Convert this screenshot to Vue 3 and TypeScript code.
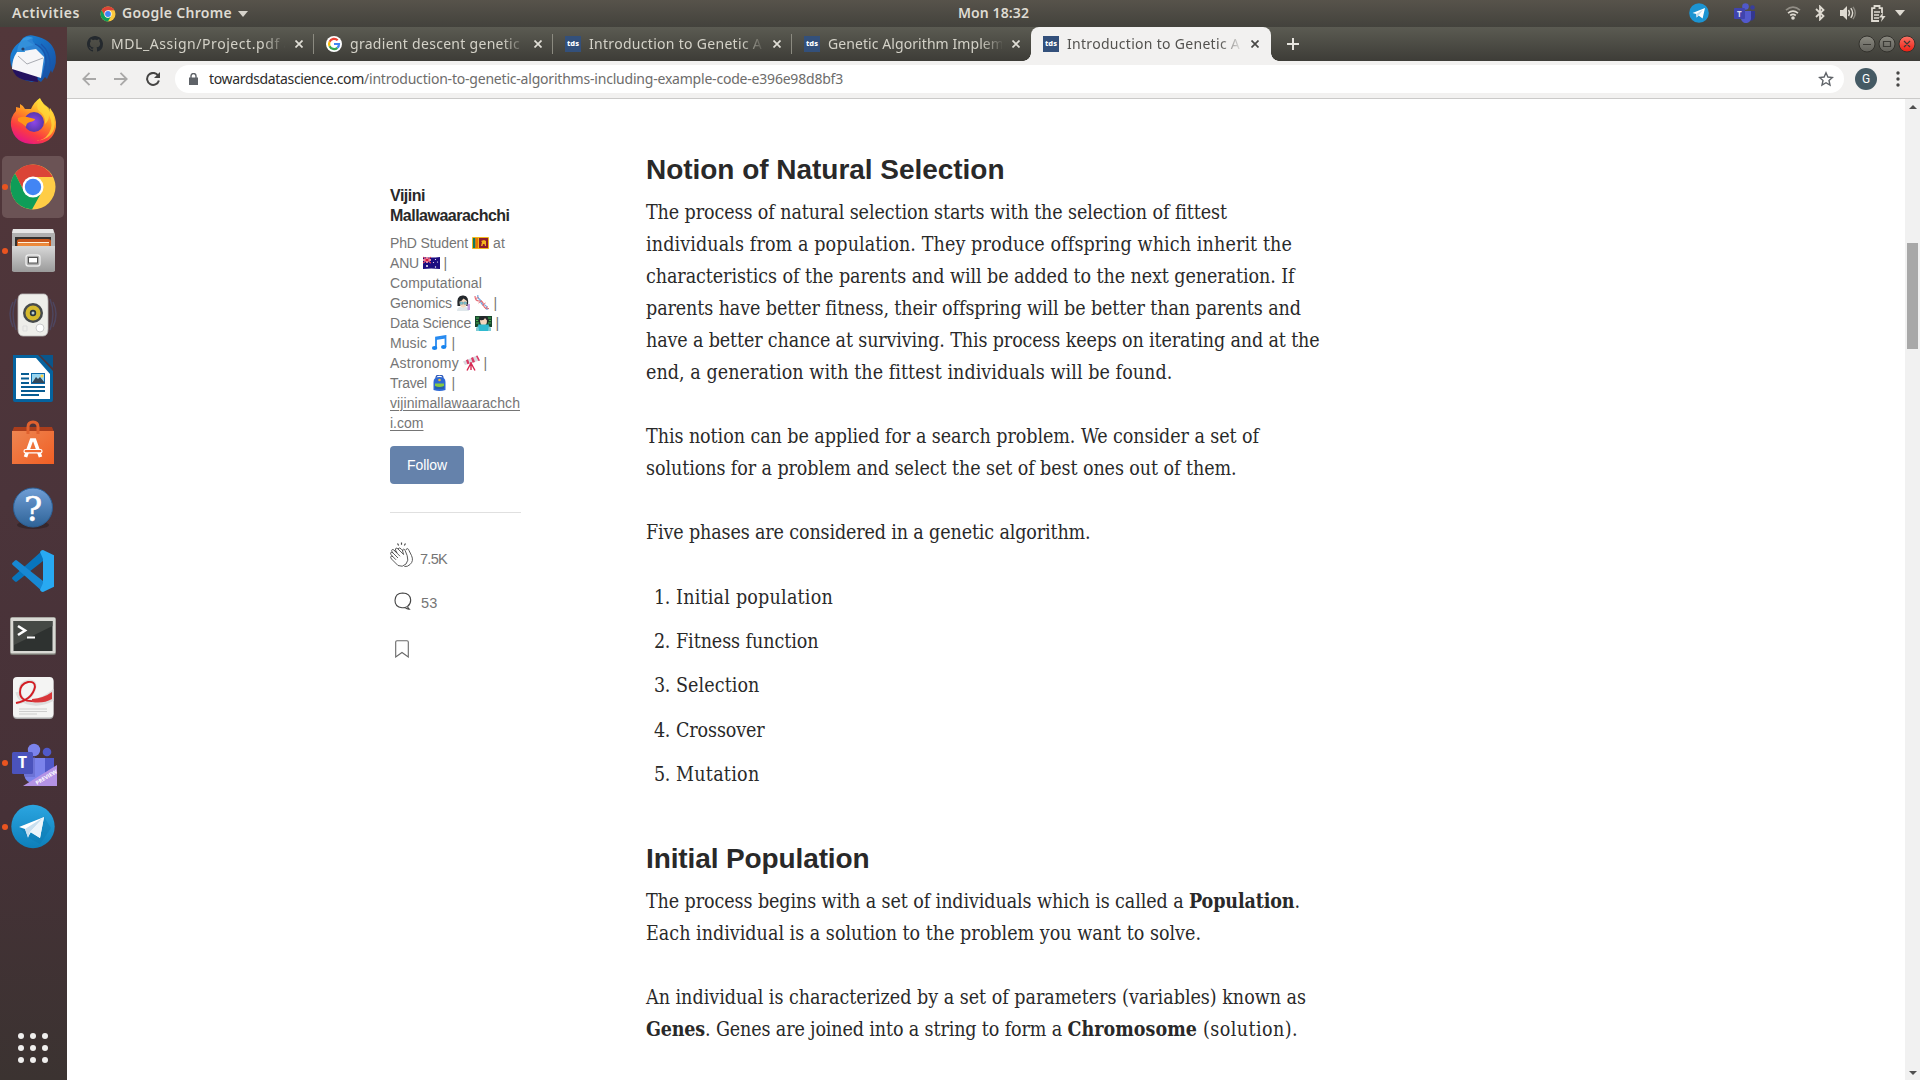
<script setup lang="ts">
interface Segment { text: string; width: number; bold?: boolean }
interface Tab { title: string; width: number; icon: 'github' | 'google' | 'tds'; active?: boolean }
interface BioLine { text: string; width: number; emoji: string[]; tail?: string; tailWidth?: number }

// Justifies a run of text to a given advance width by spreading its letters.
const vFit = {
  mounted(el: HTMLElement, binding: { value: number }) {
    const count = Array.from(el.textContent ?? '').length
    const natural = el.getBoundingClientRect().width
    if (count > 0) el.style.letterSpacing = `${(binding.value - natural) / count}px`
  },
}

const tabs: Tab[] = [
  { title: 'MDL_Assign/Project.pdf at', width: 187, icon: 'github' },
  { title: 'gradient descent genetic al', width: 186, icon: 'google' },
  { title: 'Introduction to Genetic Al', width: 177, icon: 'tds' },
  { title: 'Genetic Algorithm Implem', width: 176, icon: 'tds' },
  { title: 'Introduction to Genetic Al', width: 177, icon: 'tds', active: true },
]

const bio: BioLine[] = [
  { text: 'PhD Student', width: 78, emoji: ['lk'], tail: 'at', tailWidth: 12 },
  { text: 'ANU', width: 29, emoji: ['au'], tail: '|' },
  { text: 'Computational', width: 92, emoji: [] },
  { text: 'Genomics', width: 62, emoji: ['scientist', 'dna'], tail: '|' },
  { text: 'Data Science', width: 81, emoji: ['coder'], tail: '|' },
  { text: 'Music', width: 37, emoji: ['music'], tail: '|' },
  { text: 'Astronomy', width: 69, emoji: ['scope'], tail: '|' },
  { text: 'Travel', width: 37, emoji: ['bag'], tail: '|' },
]

const selection: Segment[][][] = [
  [
    [{ text: 'The process of natural selection starts with the selection of fittest', width: 580.5 }],
    [{ text: 'individuals from a population. They produce offspring which inherit the', width: 645.5 }],
    [{ text: 'characteristics of the parents and will be added to the next generation. If', width: 648.5 }],
    [{ text: 'parents have better fitness, their offspring will be better than parents and', width: 654 }],
    [{ text: 'have a better chance at surviving. This process keeps on iterating and at the', width: 673.5 }],
    [{ text: 'end, a generation with the fittest individuals will be found.', width: 526 }],
  ],
  [
    [{ text: 'This notion can be applied for a search problem. We consider a set of', width: 613 }],
    [{ text: 'solutions for a problem and select the set of best ones out of them.', width: 590.5 }],
  ],
  [[{ text: 'Five phases are considered in a genetic algorithm.', width: 444.5 }]],
]

const phases: Segment[] = [
  { text: 'Initial population', width: 157 },
  { text: 'Fitness function', width: 142.5 },
  { text: 'Selection', width: 83.5 },
  { text: 'Crossover', width: 88.5 },
  { text: 'Mutation', width: 83.5 },
]

const population: Segment[][][] = [
  [
    [
      { text: 'The process begins with a set of individuals which is called a ', width: 543 },
      { text: 'Population', width: 105.5, bold: true },
      { text: '.', width: 5.5 },
    ],
    [{ text: 'Each individual is a solution to the problem you want to solve.', width: 555 }],
  ],
  [
    [{ text: 'An individual is characterized by a set of parameters (variables) known as', width: 660 }],
    [
      { text: 'Genes', width: 59, bold: true },
      { text: '. Genes are joined into a string to form a ', width: 362.5 },
      { text: 'Chromosome', width: 129.5, bold: true },
      { text: ' (solution).', width: 101 },
    ],
  ],
]
</script>

<template>
  <div class="screen">
    <header class="topbar">
      <div class="top-left">
        <span v-fit="68" class="top-text">Activities</span>
        <svg class="mini-chrome" width="16" height="16" viewBox="-24 -24 48 48">
          <circle r="22.5" fill="#fbc93d" />
          <path d="M0-22.5A22.5 22.5 0 0 1 19.5-11.2H0L-9.7 5.6-19.5-11.2A22.5 22.5 0 0 1 0-22.5z" fill="#db4437" />
          <path d="M-19.5-11.2L-9.7 5.6A11.2 11.2 0 0 0 0 11.2L9.7 5.6 0 22.5A22.5 22.5 0 0 1-19.5-11.2z" fill="#0f9d58" />
          <circle r="11" fill="#fff" /><circle r="8.8" fill="#4285f4" />
        </svg>
        <span v-fit="110" class="top-text">Google Chrome</span>
        <svg class="caret" width="10" height="6" viewBox="0 0 10 6"><path d="M0 0h10L5 6z" fill="#d6d3cb" /></svg>
      </div>
      <span v-fit="71" class="top-text clock">Mon 18:32</span>
      <div class="top-right">
        <svg width="20" height="20" viewBox="0 0 20 20"><circle cx="10" cy="10" r="9.8" fill="#1c94d2" /><path d="M3.5 10L16 5l-2.4 10.5-4-3-2 2-.4-3.4z" fill="#fff" /><path d="M7.2 11.1L14 6.7l-4.4 5.7-2 2z" fill="#c4dceb" /></svg>
        <svg class="mini-teams" width="22" height="20" viewBox="0 0 22 20"><circle cx="11.5" cy="3.5" r="3.3" fill="#5059c9" /><circle cx="18.5" cy="4.5" r="2.3" fill="#383e9c" /><path d="M15 8h6v6a4 4 0 0 1-6 3z" fill="#33378f" /><path d="M7 8h10v6a5 5 0 0 1-10 2z" fill="#5259cc" /><rect y="5" width="11" height="11" rx="1" fill="#4044ad" /><text x="3" y="13.6" font-family="Open Sans, sans-serif" font-size="8" font-weight="700" fill="#d8d8ee">T</text></svg>
        <svg class="wifi" width="16" height="14" viewBox="0 0 16 14" fill="none" stroke="#dfdbd2"><path d="M1 4.2Q8-2 15 4.2" stroke-width="1.8" opacity=".45" /><path d="M3 7.1q5-4 10 0M5.2 9.5q2.8-2.4 5.6 0" stroke-width="1.7" /><circle cx="8" cy="12" r="1.8" fill="#dfdbd2" stroke="none" /></svg>
        <svg class="bt" width="10" height="16" viewBox="0 0 10 16" fill="none" stroke="#dfdbd2" stroke-width="1.8"><path d="M1 4l7.5 7L5 14.5v-13L8.5 5 1 12" /></svg>
        <svg class="vol" width="17" height="14" viewBox="0 0 17 14" fill="none"><path d="M0 4h3l4-4v14l-4-4H0z" fill="#dfdbd2" /><path d="M8.5 4q2 3 0 6M10.8 2.2q3.6 4.8 0 9.6" stroke="#dfdbd2" stroke-width="1.4" /><path d="M13 .8q4.5 6.2 0 12.4" stroke="#8c8981" stroke-width="1.4" /></svg>
        <svg class="bat" width="15" height="17" viewBox="0 0 15 17" fill="none"><path d="M8 16H1V3.2h2.5V1h5v2.2H11V8" stroke="#dfdbd2" stroke-width="1.8" /><path d="M3 7h6M3 10h5M3 13h5" stroke="#dfdbd2" stroke-width="1.6" /><path d="M12 7.5l-4 5h3L10 17l4.6-6h-3z" fill="#dfdbd2" /></svg>
        <svg class="caret-r" width="10" height="6" viewBox="0 0 10 6"><path d="M0 0h10L5 6z" fill="#dfdbd2" /></svg>
      </div>
    </header>

    <div class="body">
      <nav class="dock">
        <div class="dock-item">
          <svg viewBox="0 0 48 48">
            <defs><linearGradient id="tb" x1="0" y1="0" x2="1" y2="1"><stop offset="0" stop-color="#1b8be0" /><stop offset="1" stop-color="#154a9e" /></linearGradient></defs>
            <path d="M14 3Q19-1 26 1 42 4 46 17q3 11-3 21l-1-3-4 9-2-2-4 5-3-2-6 2Q8 45 3 33-3 17 11 7z" fill="url(#tb)" />
            <path d="M3 33q2 9 12 12l14 2-1-8z" fill="#24125f" />
            <path d="M11 8q5-9 13-5-2 3 3 7 10 7 9 17L33 41q-2-14-7-20-8 1-12 2-6-6-3-15z" fill="#2d83d4" />
            <path d="M11 8q5-9 13-5-7 2-9 6-1 5 3 10-7 2-9 6z" fill="#3699e0" />
            <path d="M8 17l19-3 8 8-3 21L3 34q0-10 5-17z" fill="#f6f6f8" />
            <path d="M9 21l9 8 16-6" stroke="#a9abb2" stroke-width="1" fill="none" />
            <path d="M8 17q1-12 9-12l8 5-8 2q-2 3-1 5z" fill="#3390da" />
            <path d="M26 9q12 5 11 20l-2 12M32 9q10 8 9 23" stroke="#1a55ad" fill="none" stroke-width="1.3" />
            <circle cx="14" cy="14" r="1.6" fill="#273c66" />
          </svg>
        </div>
        <div class="dock-item">
          <svg viewBox="0 1 48 48">
            <defs>
              <linearGradient id="fx" x1=".8" y1="0" x2=".3" y2="1"><stop offset=".1" stop-color="#ffe43a" /><stop offset=".45" stop-color="#ff8c23" /><stop offset=".75" stop-color="#fb3b42" /><stop offset="1" stop-color="#e3148a" /></linearGradient>
              <radialGradient id="fxp"><stop offset="0" stop-color="#8e47e8" /><stop offset="1" stop-color="#5a37ad" /></radialGradient>
            </defs>
            <path d="M31 0q3 7 7 9l3 5 0-4q7 9 6 19Q44 46 25 46 5 46 2 28 1 19 7 13l0-4 4 1 0-4q4 2 5 5l6 0q3-7 9-11z" fill="url(#fx)" />
            <circle cx="25" cy="24" r="10" fill="url(#fxp)" />
            <path d="M9 20q5-2 9-1l8 2q0 2-5 3-4 1-4 5-4-4-8-6z" fill="#ff9518" />
            <path d="M31 1q-5 8-1 12 7 4 6 13 4-3 4-9 5 10 0 18-5 8-14 8 15-1 19-12 3-11-5-21-6-4-9-9z" fill="#ffd93a" opacity=".75" />
          </svg>
        </div>
        <div class="dock-item running selected">
          <svg viewBox="-24 -24 48 48">
            <circle r="22.5" fill="#ffcd46" />
            <path d="M0-22.5A22.5 22.5 0 0 1 19.8-10H0L-8.7 5-18-13.5A22.5 22.5 0 0 1 0-22.5z" fill="#db4437" />
            <path d="M-18-13.5L-8.7 5A10 10 0 0 0 0 10L8.700 5-1 22.500A22.500 22.500 0 0 1-18-13.500z" fill="#0f9d58" />
            <circle r="10.5" fill="#fff" /><circle r="8.2" fill="#4285f4" />
          </svg>
        </div>
        <div class="dock-item running">
          <svg viewBox="0 0 48 48">
            <defs><linearGradient id="fl" x1="0" y1="0" x2="0" y2="1"><stop offset="0" stop-color="#d8d8d8" /><stop offset="1" stop-color="#9a9a9a" /></linearGradient></defs>
            <path d="M4 2h40l2 5v37H3V7z" fill="#b0b0b0" /><path d="M4 2h40l1 4H3z" fill="#e6e6e6" />
            <rect x="6" y="10" width="36" height="10" fill="#33302e" />
            <path d="M8 14q0-2 3-2h28q3 0 3 2v6H8z" fill="#c9571c" /><path d="M9 15h31v1.200H9z" fill="#fff0d9" /><path d="M9 16.200h31v2.800H9z" fill="#ee8a3a" />
            <path d="M3 19h43v24q0 2-2 2H5q-2 0-2-2z" fill="url(#fl)" />
            <rect x="17" y="28" width="14" height="11" rx="2.5" fill="#aaa" stroke="#ececec" stroke-width="1.4" /><rect x="19.5" y="30.5" width="9" height="5.5" fill="#fff" stroke="#555" />
          </svg>
        </div>
        <div class="dock-item">
          <svg viewBox="0 0 48 48">
            <g fill="none" stroke="#4d4a68" stroke-width="1.5" opacity=".8"><path d="M4 11q-6 12 0 25M7 8q-6 15 0 31M44 11q6 12 0 25M41 8q6 15 0 31" /></g>
            <path d="M13 3h22q4 0 4 7v28q0 7-5 7H14q-5 0-5-7V10q0-7 4-7z" fill="#eeeeea" stroke="#bbb" stroke-width=".8" />
            <circle cx="24" cy="22" r="10" fill="#474b4c" /><circle cx="24" cy="22" r="7.5" fill="#d5b92c" /><circle cx="24" cy="22" r="3.2" fill="#293640" /><circle cx="24" cy="22" r="1.5" fill="#bcc" />
            <circle cx="31" cy="37" r="4" fill="#fff" stroke="#ccc" /><path d="M14 35h4v5h-4z" fill="none" stroke="#ddd" />
          </svg>
        </div>
        <div class="dock-item">
          <svg viewBox="0 0 48 48">
            <path d="M4 0h25l15 16v29q0 2-2 2H6q-2 0-2-2z" fill="#05639f" /><path d="M7 3h20l14 16v25H7z" fill="#fff" /><path d="M31 0h13v13z" fill="#0a568b" />
            <path d="M12 19h8M12 23.5h8M12 28h8M12 32h24M12 36h24M12 40h18" stroke="#075c92" stroke-width="2" />
            <path d="M22 18h14v11H22z" fill="#0b69aa" /><path d="M23 19h12v8H23z" fill="#99d5ef" /><circle cx="33" cy="21" r="1.5" fill="#ffd33c" /><path d="M23 28l4-6 2 2 2-2 5 6z" fill="#334758" />
          </svg>
        </div>
        <div class="dock-item">
          <svg viewBox="0 0 48 48">
            <defs><linearGradient id="sw" x1="0" y1="0" x2="1" y2="1"><stop offset="0" stop-color="#ed8551" /><stop offset="1" stop-color="#f15f24" /></linearGradient></defs>
            <path d="M5 8h38l2 5H3z" fill="#a93d1c" /><path d="M3 12h42v33H3z" fill="url(#sw)" />
            <path d="M19 15V8q0-5 5-5t5 5v7" fill="none" stroke="#e0612e" stroke-width="3" />
            <path d="M16.500 38l6-17h3l6 17M18 32h12" stroke="#fff" stroke-width="3.600" fill="none" /><rect x="15" y="30.500" width="18" height="3.400" rx="1.700" fill="#f16a31" stroke="#fff" stroke-width="1.200" />
          </svg>
        </div>
        <div class="dock-item">
          <svg viewBox="0 -1 48 48">
            <defs><linearGradient id="hp" x1="0" y1="0" x2="0" y2="1"><stop offset="0" stop-color="#709ed6" /><stop offset="1" stop-color="#2e6397" /></linearGradient></defs>
            <ellipse cx="24" cy="41" rx="16" ry="4" fill="#000" opacity=".25" />
            <circle cx="24" cy="23.500" r="19.500" fill="url(#hp)" stroke="#2c5f94" />
            <text x="24" y="36.500" text-anchor="middle" font-family="DejaVu Serif, serif" font-size="34" fill="#fff" stroke="#fff" stroke-width=".5">?</text>
          </svg>
        </div>
        <div class="dock-item">
          <svg viewBox="0 0 48 48">
            <path d="M34 3v11L8 34.500q-1 .8-2 0L3.500 32.200q-1-1 0-2z" fill="#0875bd" /><path d="M34 45V34L8 13.500q-1-.8-2 0L3.500 15.800q-1 1 0 2z" fill="#1788d3" /><path d="M34 3l11 5.200v31.600L34 45q-2 0-3-2l3-7V12l-3-7q1-2 3-2z" fill="#28a9f2" />
          </svg>
        </div>
        <div class="dock-item">
          <svg viewBox="0 -1 48 48">
            <rect x="1" y="5" width="46" height="38" rx="2" fill="#777670" /><rect x="1.500" y="5.500" width="45" height="36" rx="1.500" fill="#d9d9d4" /><rect x="4.500" y="9" width="39" height="30" fill="#2e3230" /><path d="M4.500 9h39v5L5 33z" fill="#454945" />
            <path d="M9 14l7 4.500-7 4.500" fill="none" stroke="#fff" stroke-width="2.600" /><path d="M18 25.500h8" stroke="#fff" stroke-width="2" />
          </svg>
        </div>
        <div class="dock-item">
          <svg viewBox="0 0 48 48">
            <rect x="4" y="3" width="40.500" height="41" rx="4" fill="#aaa" /><rect x="4" y="2" width="40.500" height="40.500" rx="4" fill="#f4f4f3" />
            <path d="M8 28Q24 25 26 11q0-5-6-5Q11 7 11 16q0 12 14 10 11-3 18-9v8q-10 5-18 4-15-1-17-12" fill="none" stroke="#ddd" stroke-width="3" />
            <path d="M7 28Q23 25 26 12q0-6-7-5-8 2-8 10 0 10 14 9" fill="none" stroke="#d31d24" stroke-width="1.900" /><path d="M23 24q12-1 20-7v7q-9 5-20 3z" fill="#d9373a" />
            <path d="M10 34h28M10 36.500h28M10 39h18" stroke="#c9c9c9" stroke-width=".9" />
          </svg>
        </div>
        <div class="dock-item running">
          <svg viewBox="0 -1 48 48">
            <circle cx="25" cy="10" r="6.200" fill="#7b83eb" /><circle cx="38" cy="12" r="4.300" fill="#5059c9" /><path d="M32 18h13v14q-2 7-13 8z" fill="#5059c9" /><path d="M17 18h19v16q-2 9-12 9-7 0-9-8z" fill="#7b83eb" />
            <path d="M12 17h14v20H16z" fill="#5f63c2" opacity=".5" /><rect x="3" y="12" width="21" height="22" rx="1.500" fill="#4b53bc" /><text x="13.400" y="28" text-anchor="middle" font-family="Open Sans, sans-serif" font-size="16" font-weight="700" fill="#fff">T</text>
            <path d="M14 46L48 25v21z" fill="#b493e5" /><text transform="translate(28 45) rotate(-31)" font-family="Open Sans, sans-serif" font-size="5.500" font-weight="700" fill="#fff">PREVIEW</text>
          </svg>
        </div>
        <div class="dock-item running">
          <svg viewBox="0 0 48 48">
            <defs><linearGradient id="tg" x1="0" y1="0" x2="0" y2="1"><stop offset="0" stop-color="#2ba5e0" /><stop offset="1" stop-color="#0d7fba" /></linearGradient></defs>
            <circle cx="24" cy="23.500" r="21.700" fill="url(#tg)" /><path d="M10 24l25-10 7 11-11 16-11-6z" fill="#0b76ad" opacity=".35" /><path d="M10 24l25-10-4 21-9-6-3 5-3-8z" fill="#fff" /><path d="M16 26l19-12-14 15-2 6z" fill="#c8dfef" /><path d="M21 29l14-15-4 21z" fill="#edf5fa" />
          </svg>
        </div>
        <div class="apps"><i v-for="n in 9" :key="n" /></div>
      </nav>

      <main class="window">
        <div class="tabstrip">
          <div v-for="(tab, i) in tabs" :key="i" class="tab" :class="{ active: tab.active, divided: i < 3 }">
            <svg v-if="tab.icon === 'github'" class="favicon" width="16" height="16" viewBox="0 0 16 16"><path fill="#24292e" d="M8 0C3.580 0 0 3.580 0 8c0 3.540 2.290 6.530 5.470 7.590.4.070.55-.17.55-.38 0-.19-.01-.82-.01-1.490-2.010.37-2.530-.49-2.690-.94-.09-.23-.48-.94-.82-1.130-.28-.15-.68-.52-.01-.53.63-.01 1.080.58 1.230.82.72 1.210 1.870.87 2.330.66.070-.52.28-.87.51-1.070-1.780-.2-3.640-.89-3.640-3.950 0-.87.31-1.590.82-2.150-.08-.2-.36-1.020.08-2.120 0 0 .67-.21 2.200.82.64-.18 1.320-.27 2-.27s1.360.090 2 .27c1.530-1.040 2.200-.82 2.200-.82.44 1.100.16 1.920.080 2.120.51.56.82 1.270.82 2.150 0 3.070-1.870 3.750-3.650 3.950.29.25.54.73.54 1.480 0 1.070-.01 1.930-.01 2.200 0 .21.15.46.55.38A8.010 8.010 0 0 0 16 8c0-4.420-3.580-8-8-8z" /></svg>
            <svg v-else-if="tab.icon === 'google'" class="favicon" width="16" height="16" viewBox="0 0 16 16"><circle cx="8" cy="8" r="8" fill="#fff" /><g fill="none" stroke-width="2.200"><path d="M11.700 4.300A5 5 0 0 0 3.600 5.800" stroke="#ea4335" /><path d="M3.600 5.800a5 5 0 0 0 0 4.400" stroke="#fbbc05" /><path d="M3.600 10.200a5 5 0 0 0 7.800 1.600" stroke="#34a853" /><path d="M11.400 11.800A5 5 0 0 0 13 8H8" stroke="#4285f4" /></g></svg>
            <span v-else class="favicon tds">tds</span>
            <div class="tab-title"><span v-fit="tab.width">{{ tab.title }}</span></div>
            <svg class="tab-close" width="8" height="8" viewBox="0 0 8 8"><path d="M.5.5l7 7m0-7l-7 7" stroke="currentColor" stroke-width="1.700" /></svg>
          </div>
          <svg class="new-tab" width="12" height="12" viewBox="0 0 12 12"><path d="M6 0v12M0 6h12" stroke="#e6e4de" stroke-width="2" /></svg>
          <div class="controls">
            <svg width="60" height="18" viewBox="0 0 60 18">
              <defs>
                <linearGradient id="wg" x1="0" y1="0" x2="0" y2="1"><stop offset="0" stop-color="#8b8a81" /><stop offset="1" stop-color="#61605a" /></linearGradient>
                <linearGradient id="wr" x1="0" y1="0" x2="0" y2="1"><stop offset="0" stop-color="#fa7466" /><stop offset="1" stop-color="#ed1d12" /></linearGradient>
              </defs>
              <g stroke="#33322d"><circle cx="10" cy="9" r="8" fill="url(#wg)" /><circle cx="30" cy="9" r="8" fill="url(#wg)" /><circle cx="50" cy="9" r="8" fill="url(#wr)" /></g>
              <path d="M6 9.500h8M26.500 6.500h7v5h-7zM47 6l6 6m0-6l-6 6" fill="none" stroke="#3b3a35" stroke-width="1.200" />
            </svg>
          </div>
        </div>

        <div class="toolbar">
          <svg class="back" width="14" height="14" viewBox="0 0 14 14" fill="none" stroke="#a9a8a7" stroke-width="1.800"><path d="M14 7H1.500M7.500.8L1.300 7l6.200 6.200" /></svg>
          <svg class="forward" width="14" height="14" viewBox="0 0 14 14" fill="none" stroke="#a9a8a7" stroke-width="1.800"><path d="M0 7h12.500M6.500.8L12.700 7l-6.200 6.200" /></svg>
          <svg class="reload" width="14" height="14" viewBox="0 0 14 14"><path d="M12 3.400A6 6 0 1 0 12.900 8.500" fill="none" stroke="#454443" stroke-width="2" /><path d="M14 0v6H8z" fill="#454443" /></svg>
          <div class="omnibox">
            <svg class="lock" width="9" height="12" viewBox="0 0 9 12"><path d="M0 4.500h9V12H0z" fill="#5f6368" /><path d="M2 5V3a2.500 2.500 0 0 1 5 0v2" fill="none" stroke="#5f6368" stroke-width="1.400" /></svg>
            <span v-fit="155" class="host">towardsdatascience.com</span><span v-fit="479" class="path">/introduction-to-genetic-algorithms-including-example-code-e396e98d8bf3</span>
            <svg class="star" width="16" height="16" viewBox="0 0 16 16"><path d="M8 1.800l1.900 4.200 4.500.5-3.400 3 1 4.500-4-2.300L4 14l1-4.500-3.400-3 4.500-.5z" fill="none" stroke="#5f6368" stroke-width="1.400" /></svg>
          </div>
          <span class="avatar">G</span>
          <svg class="menu" width="4" height="16" viewBox="0 0 4 16" fill="#474645"><circle cx="2" cy="2" r="1.700" /><circle cx="2" cy="8" r="1.700" /><circle cx="2" cy="14" r="1.700" /></svg>
        </div>

        <div class="page">
          <aside class="author">
            <div class="name"><span v-fit="35">Vijini</span><br><span v-fit="119.500">Mallawaarachchi</span></div>
            <div class="bio">
              <div v-for="line in bio" :key="line.text" class="bio-line">
                <span v-fit="line.width">{{ line.text }}</span>
                <template v-for="e in line.emoji" :key="e">
                  <svg v-if="e === 'lk'" width="17" height="16" viewBox="0 0 17 16"><rect y="2" width="17" height="12" rx=".8" fill="#f1b71c" /><path d="M1 3h2.500v10H1z" fill="#117a5d" /><path d="M3.500 3H6v10H3.500z" fill="#eb7400" /><path d="M7 3h9v10H7z" fill="#8d1c2c" /><path d="M9 11l1-4-1-1 3-1 2 1v5h-1l-.5-2-1.500 0-.5 2z" fill="#f5b51d" /></svg>
                  <svg v-else-if="e === 'au'" width="17" height="16" viewBox="0 0 17 16"><path d="M0 2q8 1 17 0v12q-9-1-17 0z" fill="#1d0d80" /><path d="M0 2l8 6M8 2L0 8" stroke="#fff" stroke-width="1" /><path d="M4 2v6M0 5h8" stroke="#fff" stroke-width="2" /><path d="M4 2v6M0 5h8M0 2l8 6M8 2L0 8" stroke="#d8123c" stroke-width="1" /><g fill="#fff"><circle cx="4" cy="11" r="1" /><circle cx="12.500" cy="4.500" r=".6" /><circle cx="10.500" cy="7.500" r=".6" /><circle cx="14.500" cy="7" r=".6" /><circle cx="12.500" cy="12" r=".7" /></g></svg>
                  <svg v-else-if="e === 'scientist'" class="narrow" width="15" height="16" viewBox="0 0 15 16"><path d="M1.500 11Q0 0 7 .5 13.500 0 12 11z" fill="#25292d" /><path d="M3.500 6.500Q6 6 7.500 3.500L11 6q0 7-3.700 7T3.500 6.500z" fill="#f5d9c0" /><path d="M1 16q0-4 4-4l2 1 2-1q4 0 4 4z" fill="#dfe7eb" /><path d="M4 7h2.700v2.200H4zM7.800 7h2.700v2.200H7.800z" fill="#84d0df" stroke="#55808d" stroke-width=".5" /><path d="M11.500 9H14v6h-2.500z" fill="#c9a1e0" /></svg>
                  <svg v-else-if="e === 'dna'" class="dna" width="16" height="16" viewBox="0 0 16 16" fill="none" stroke-width="1.200"><path d="M1 1q0 5 4 5 4-.5 4.500 4 .5 4 5.500 3.500" stroke="#e56c75" /><path d="M4 0q-1 3 2 4.500Q7 9 9 9.500q4 0 4 5.500" stroke="#72a6dd" /><path d="M1.500 3.500l3-1M4.500 8L8 5.500M8 10.500L11.500 8M11 14l3-2.500" stroke="#e56c75" stroke-width="1" /></svg>
                  <svg v-else-if="e === 'coder'" width="17" height="16" viewBox="0 0 17 16"><path d="M0 1h17v11H0z" fill="#17472e" /><path d="M1 3h3M1 5.500h2M1 8h3M13 3h3M14 5.500h2M13 8h3" stroke="#4baf50" /><path d="M4 7Q3 0 8.500 1q6-1 4.500 7z" fill="#24272a" /><path d="M5 5q4 1 5-2l2 2.500q0 5-3.500 5T5 5z" fill="#f4d6bd" /><path d="M1 16v-3q1-2 4-2h7q3 0 4 2v3z" fill="#80ccd5" /><path d="M3 9.500h11l-1 6.500H4z" fill="#30bad0" /></svg>
                  <svg v-else-if="e === 'music'" width="17" height="16" viewBox="0 0 17 16"><path d="M5 13V2.500L14.500 1v11" fill="none" stroke="#278af0" stroke-width="1.800" /><path d="M5 3l9.500-1.500v2L5 5z" fill="#278af0" /><ellipse cx="3.600" cy="13" rx="2.700" ry="2" fill="#1683ee" /><ellipse cx="12.700" cy="12" rx="2.700" ry="2" fill="#1683ee" /></svg>
                  <svg v-else-if="e === 'scope'" width="17" height="16" viewBox="0 0 17 16"><path d="M0 6.500L14 .5l2.500 5L2 10z" fill="#d9d9df" /><path d="M3 5.300l2-1 1.600 4.200-2.200.8zM8 3l2-.9 2 4.800-2.400.8zM13 1l1.500-.6 2.500 5-1.500.5z" fill="#dc3964" /><path d="M8 8l-4 7.500M8 8l4 7.500M8 7v8" stroke="#d72751" stroke-width="1.400" /></svg>
                  <svg v-else width="17" height="16" viewBox="0 0 17 16"><path d="M5 3q0-3 3.500-3T12 3" fill="none" stroke="#2d57b4" stroke-width="1.300" /><path d="M2.500 15V7q0-5 6-5t6 5v8q-6 2-12 0z" fill="#2d68d4" /><rect x="4" y="9" width="9" height="5" rx="1" fill="#2460ad" /><path d="M4 8.500h9v2.500q-4.500 2-9 0z" fill="#86c941" /><circle cx="8.500" cy="5" r="1.300" fill="#ebbc35" /></svg>
                </template>
                <span v-if="line.tail === '|'" class="bar">|</span>
                <span v-else-if="line.tail" v-fit="line.tailWidth ?? 0">{{ line.tail }}</span>
              </div>
              <a class="site"><span v-fit="130">vijinimallawaarachch</span><br><span v-fit="33.500">i.com</span></a>
            </div>
            <button class="follow"><span v-fit="40">Follow</span></button>
            <div class="stats">
              <div class="stat claps">
                <svg width="24" height="26" viewBox="0 0 24 26" fill="none" stroke="#4a4a4a" stroke-width=".9"><path d="M7.500 1.500l1.200 2M11.500 .5v2.300M15.500 1.500l-1.200 2" stroke-width="1.200" /><path d="M8 23.500L1.500 17Q0 15 1 14.300q.8-.6 2 .5L1 12.500q-1-1.600 0-2.200.9-.4 2 .7L2 9.500q-.8-1.500.3-2 .8-.3 1.800.7L7 11 5.600 8.200q-.5-1.600.4-2 .9-.4 2 .8l5.600 5.500-1-3.500q-.2-1.600.9-1.800 1.300-.1 1.700 1.500l2 5q1.800 4.800-1.200 8.300-3.600 3.700-8 1.500z" /><path d="M3 11l5 5M4 8.200l6 6M3 14.800l3 3M8 7q1-2 3-.2l2 2M16 8q.5-1.800 1.800-1.300.9.500 1.200 1.800l2.500 5q2.500 5.500-1.500 9-2.500 2.500-5.600 2" /></svg>
                <span v-fit="27">7.5K</span>
              </div>
              <div class="stat comments">
                <svg width="18" height="18" viewBox="0 0 18 18"><path d="M13 14.600Q11 16 8 15.700.8 15 1 8.300 1.300 1.200 8.700 1q7.500.1 8 7 0 4-3 6.300-.2 1.500 1.600 2.800-2 .2-4.300-1.600" fill="none" stroke="#444" stroke-width="1.100" /></svg>
                <span v-fit="16.500">53</span>
              </div>
              <div class="stat"><svg class="bookmark" width="14" height="18" viewBox="0 0 14 18"><path d="M.7 17V2q0-1.300 1.300-1.300h10q1.300 0 1.300 1.300v15L7 12.500z" fill="none" stroke="#696969" stroke-width="1.100" /></svg></div>
            </div>
          </aside>

          <article class="story">
            <h2><span v-fit="358.500">Notion of Natural Selection</span></h2>
            <p v-for="(para, i) in selection" :key="i">
              <span v-for="(line, j) in para" :key="j" class="line"><span v-for="(s, k) in line" :key="k" v-fit="s.width" :class="{ strong: s.bold }">{{ s.text }}</span></span>
            </p>
            <ol>
              <li v-for="(phase, i) in phases" :key="phase.text"><span class="num">{{ i + 1 }}.</span><span v-fit="phase.width">{{ phase.text }}</span></li>
            </ol>
            <h2><span v-fit="223.500">Initial Population</span></h2>
            <p v-for="(para, i) in population" :key="i">
              <span v-for="(line, j) in para" :key="j" class="line"><span v-for="(s, k) in line" :key="k" v-fit="s.width" :class="{ strong: s.bold }">{{ s.text }}</span></span>
            </p>
          </article>

          <div class="scrollbar">
            <svg width="8" height="4" viewBox="0 0 8 4"><path d="M0 4h8L4 0z" fill="#505050" /></svg>
            <div class="thumb" />
            <svg class="down" width="8" height="4" viewBox="0 0 8 4"><path d="M0 0h8L4 4z" fill="#505050" /></svg>
          </div>
        </div>
      </main>
    </div>
  </div>
</template>

<style>
body { margin: 0; overflow: hidden; }
</style>

<style scoped>
.screen { width: 1920px; height: 1080px; display: flex; flex-direction: column; overflow: hidden; background: #fff; font-family: "Noto Sans", "Open Sans", sans-serif; }
.screen span { white-space: pre; }
.screen svg { display: block; flex: none; }
.topbar { height: 27px; flex: none; display: grid; grid-template-columns: 958px 1fr auto; align-items: center; background: linear-gradient(#57534b, #43423c); color: #dfdbd2; }
.top-text { display: inline-block; font-size: 14px; font-weight: 600; line-height: 26px; height: 27px; justify-self: start; }
.top-left { display: flex; align-items: center; padding-left: 12px; }
.mini-chrome { margin: 0 6px 0 20px; }
.caret { margin-left: 6px; }
.top-right { display: flex; align-items: center; padding: 0 15px 1px 0; }
.mini-teams { margin-left: 25px; }
.wifi { margin-left: 29px; }
.bt { margin-left: 14px; }
.vol { margin-left: 15px; }
.bat { margin-left: 14px; }
.caret-r { margin-left: 9px; }

.body { display: flex; flex: 1; min-height: 0; }
.dock { width: 67px; flex: none; display: flex; flex-direction: column; background: linear-gradient(#52373a, #4b343a 45%, #463137 75%, #3b3331); }
.dock-item { width: 62px; height: 62px; margin: 1px 0 1px 2px; border-radius: 5px; display: flex; align-items: center; position: relative; }
.dock-item svg { width: 48px; height: 48px; margin-left: 7px; overflow: visible; }
.selected { background: #6b5355; }
.running::before { content: ""; position: absolute; left: 0; top: 28px; width: 6px; height: 6px; border-radius: 50%; background: #e95420; }
.apps { margin: auto 0 17px 18px; display: grid; grid-template-columns: repeat(3, 6px); gap: 6px; }
.apps i { width: 6px; height: 6px; border-radius: 50%; background: #f0efee; }

.window { flex: 1; min-width: 0; display: flex; flex-direction: column; }
.tabstrip { height: 34px; flex: none; display: flex; background: linear-gradient(#5b5b52, #3d3c37); padding-left: 8px; color: #d4d2c8; }
.tab { width: 239px; height: 34px; box-sizing: border-box; padding-left: 12px; display: flex; align-items: center; position: relative; }
.divided::after { content: ""; position: absolute; right: 0; top: 7px; width: 1px; height: 20px; background: #8b8a80; }
.active { width: 240px; background: #f2f1f0; border-radius: 8px 8px 0 0; color: #53524f; }
.active::before, .active::after { content: ""; position: absolute; bottom: 0; width: 8px; height: 8px; }
.active::before { left: -8px; background: radial-gradient(circle at 0 0, transparent 7.500px, #f2f1f0 8px); }
.active::after { right: -8px; background: radial-gradient(circle at 100% 0, transparent 7.500px, #f2f1f0 8px); }
.favicon { width: 16px; height: 16px; flex: none; }
.tds { background: #33507b; color: #fff; font-size: 7.500px; font-weight: 800; line-height: 15px; text-align: center; }
.tab-title { margin-left: 8px; width: 174px; overflow: hidden; font-size: 14px; line-height: 20px; -webkit-mask-image: linear-gradient(90deg, #000 152px, rgba(0, 0, 0, .1) 174px); mask-image: linear-gradient(90deg, #000 152px, rgba(0, 0, 0, .1) 174px); }
.tab-title span { display: inline-block; }
.tab-close { margin-left: 10px; color: #e0ded6; }
.active .tab-close { color: #494846; }
.new-tab { margin: 11px 0 0 16px; }
.controls { margin: 8px 3px 0 auto; }

.toolbar { height: 38px; flex: none; box-sizing: border-box; background: #f2f1f0; border-bottom: 1px solid #cbcac9; display: flex; align-items: center; padding: 0 20px 1px 15px; }
.forward { margin-left: 18px; }
.reload { margin-left: 18px; }
.omnibox { margin-left: 15px; width: 1669px; height: 28px; border-radius: 14px; background: #fff; display: flex; align-items: center; font-size: 14px; }
.omnibox span { display: inline-block; line-height: 26px; }
.lock { margin: 0 11px 0 14px; }
.host { color: #2d2c2b; }
.path { color: #6d6c6b; }
.star { margin: 0 10px 0 auto; }
.avatar { margin-left: 11px; width: 22px; height: 22px; border-radius: 50%; background: #455a64; color: #fff; font: 12px/22px Roboto, sans-serif; text-align: center; }
.menu { margin-left: auto; }

.page { flex: 1; min-height: 0; display: flex; background: #fff; }
.author { width: 131px; margin-left: 323px; padding-top: 87px; font-family: "Liberation Sans", Arial, sans-serif; color: #757575; flex: none; }
.author span { display: inline-block; }
.name { font-size: 16px; line-height: 20px; font-weight: 700; color: #292929; height: 40px; }
.name span, .site span { vertical-align: top; }
.bio { margin-top: 7px; font-size: 14px; line-height: 20px; }
.bio-line { display: flex; height: 20px; }
.bio-line svg { margin: 2px 4px 0; }
.bio-line svg.narrow { margin-right: 0; }
.bio-line svg.dna { margin-left: 3px; }
.bar { width: 4px; margin-left: -.5px; }
.site { display: block; height: 40px; }
.site span { text-decoration: underline; text-underline-offset: 2px; text-decoration-thickness: 1px; }
.follow { display: block; margin: 13px 0 0; width: 74px; height: 38px; padding: 0; border: 0; border-radius: 4px; background: #6582ab; color: #fff; font: 14px/38px "Liberation Sans", Arial, sans-serif; }
.stats { margin-top: 28px; border-top: 1px solid #e0e0e0; padding-top: 29px; font-size: 14.500px; }
.stat { display: flex; height: 26px; align-items: center; line-height: 20px; }
.claps span { margin: 7px 0 0 6px; }
.comments { margin-top: 20px; padding-left: 4px; }
.comments span { margin: 3px 0 0 9px; }
.bookmark { margin: 43px 0 0 5px; }
.story { margin-left: 125px; width: 700px; padding-top: 55px; font-family: "DejaVu Serif Condensed", "DejaVu Serif", serif; font-stretch: condensed; font-size: 19.500px; line-height: 32px; color: #292929; flex: none; }
.story span { display: inline-block; vertical-align: top; }
.story .line { display: block; height: 32px; }
.story h2 { margin: 0 0 11px; font: 700 28px/32px "Liberation Sans", Arial, sans-serif; height: 32px; color: #292929; }
.story p { margin: 0 0 32px; }
.story .strong { font-weight: 700; }
.story ol { list-style: none; margin: 33px 0 52px; padding: 0; }
.story li { height: 32px; margin-bottom: 12.200px; display: flex; }
.story li:last-child { margin-bottom: 0; }
.num { width: 22px; margin-left: 8px; letter-spacing: -.5px; }
.scrollbar { margin-left: auto; width: 15px; background: #f1f1f1; display: flex; flex-direction: column; align-items: center; padding-top: 6px; }
.thumb { margin-top: 134px; width: 11px; height: 106px; background: #a8a8a8; }
.down { margin: auto 0 5px; }
</style>
